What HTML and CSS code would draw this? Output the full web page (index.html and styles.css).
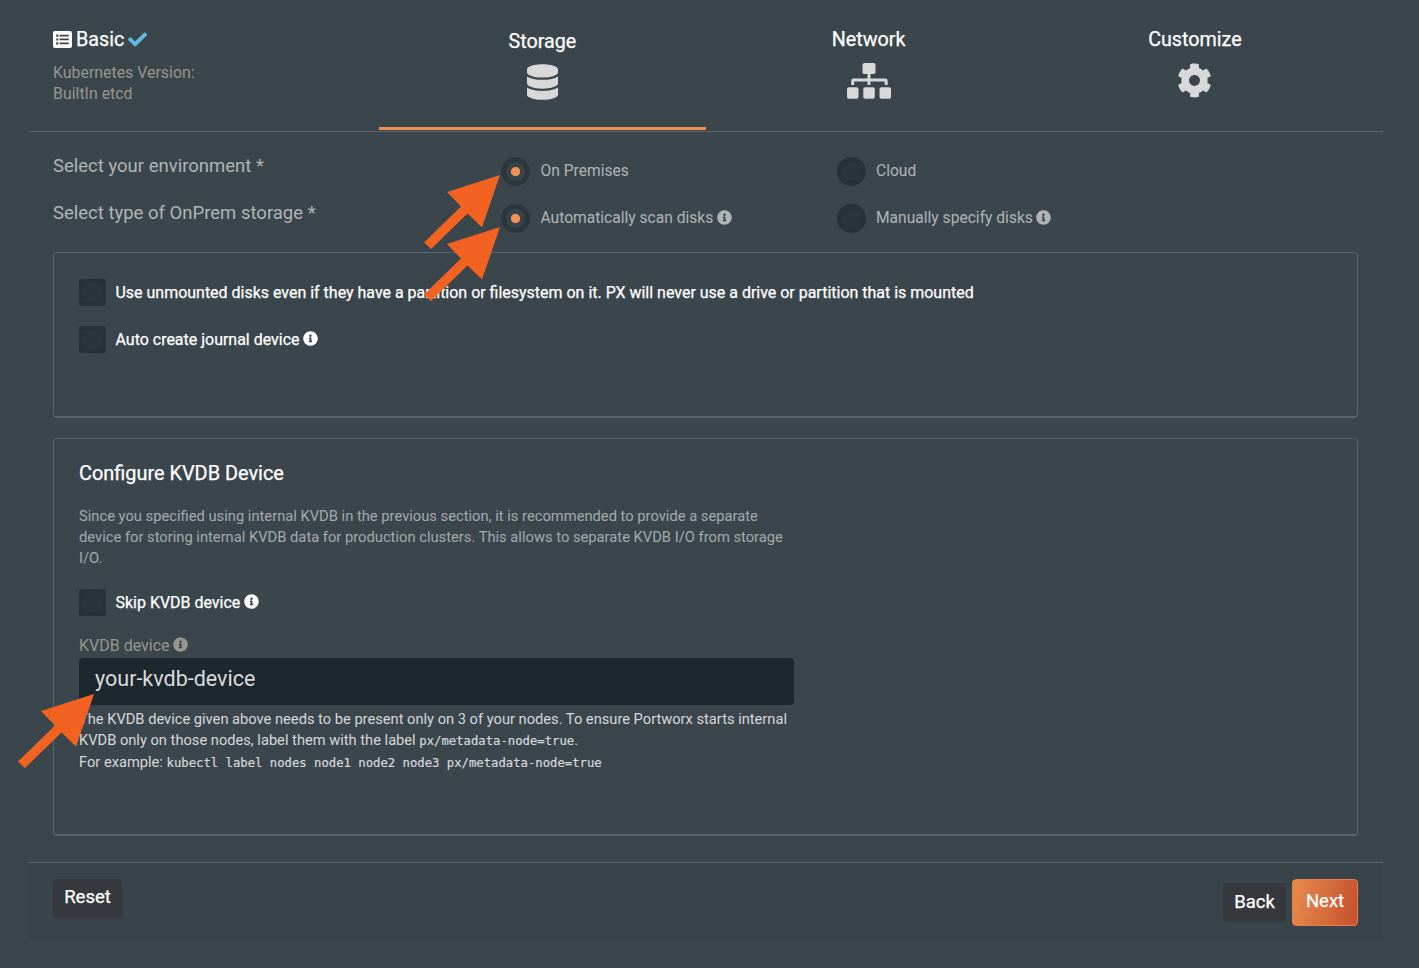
FILE: index.html
```html
<!DOCTYPE html>
<html lang="en">
<head>
<meta charset="utf-8">
<title>Spec Generator</title>
<link rel="stylesheet" href="styles.css">
</head>
<body>
<svg class="defs" width="0" height="0" aria-hidden="true">
  <symbol id="info" viewBox="0 0 512 512"><path d="M256 8C119.043 8 8 119.083 8 256c0 136.997 111.043 248 248 248s248-111.003 248-248C504 119.083 392.957 8 256 8zm0 110c23.196 0 42 18.804 42 42s-18.804 42-42 42-42-18.804-42-42 18.804-42 42-42zm56 254c0 6.627-5.373 12-12 12h-88c-6.627 0-12-5.373-12-12v-24c0-6.627 5.373-12 12-12h12v-64h-12c-6.627 0-12-5.373-12-12v-24c0-6.627 5.373-12 12-12h64c6.627 0 12 5.373 12 12v100h12c6.627 0 12 5.373 12 12v24z"/></symbol>
  <symbol id="arrow" viewBox="0 0 83 75"><path d="M82 1 29 18 43 32.500 6 68.500 13 75 49.500 39.500 64 53.500z"/></symbol>
</svg>
<main class="wizard">
  <nav class="tabs">
    <div class="tab tab-basic">
      <div class="tab-title">
        <svg class="icon-list" viewBox="0 0 19 17"><path fill-rule="evenodd" d="M2 0h15a2 2 0 0 1 2 2v13a2 2 0 0 1-2 2H2a2 2 0 0 1-2-2V2a2 2 0 0 1 2-2zM3.200 3.500v2.200h2.200V3.500zM6.600 3.700v1.700h9.200V3.700zM3.200 7.400v2.200h2.200V7.400zM6.600 7.600v1.700h9.200V7.600zM3.200 11.300v2.200h2.200v-2.200zM6.600 11.500v1.700h9.200v-1.700z"/></svg>
        <span>Basic</span>
        <svg class="icon-check" viewBox="0 0 512 512"><path d="M173.898 439.404l-166.400-166.400c-9.997-9.997-9.997-26.206 0-36.204l36.203-36.204c9.997-9.998 26.207-9.998 36.204 0L192 312.690 432.095 72.596c9.997-9.997 26.207-9.997 36.204 0l36.203 36.204c9.997 9.997 9.997 26.206 0 36.204l-294.400 294.401c-9.998 9.997-26.207 9.997-36.204-.001z"/></svg>
      </div>
      <div class="summary">Kubernetes Version:<br>BuiltIn etcd</div>
    </div>
    <div class="tab tab-active">
      <span>Storage</span>
      <svg class="icon-db" viewBox="0 0 448 512"><path d="M448 73.143v45.714C448 159.143 347.667 192 224 192S0 159.143 0 118.857V73.143C0 32.857 100.333 0 224 0s224 32.857 224 73.143zM448 176v102.857C448 319.143 347.667 352 224 352S0 319.143 0 278.857V176c48.125 33.143 136.208 48.572 224 48.572S399.874 209.143 448 176zm0 160v102.857C448 479.143 347.667 512 224 512S0 479.143 0 438.857V336c48.125 33.143 136.208 48.572 224 48.572S399.874 369.143 448 336z"/></svg>
    </div>
    <div class="tab">
      <span>Network</span>
      <svg class="icon-map" viewBox="0 0 44 36"><rect x="15.500" y="0" width="13" height="11" rx="1.800"/><rect y="24.300" width="11.500" height="11.500" rx="1.800"/><rect x="16.300" y="24.300" width="11.500" height="11.500" rx="1.800"/><rect x="32.500" y="24.300" width="11.500" height="11.500" rx="1.800"/><path d="M20.500 10h3v5.500h15a2.200 2.200 0 0 1 2.200 2.200V22h-3v-3.600H23.500V22h-3v-3.600H7.200V22h-3v-4.300a2.200 2.200 0 0 1 2.200-2.200h14.100z"/></svg>
    </div>
    <div class="tab">
      <span>Customize</span>
      <svg class="icon-cog" viewBox="0 0 512 512"><path d="M487.400 315.700l-42.600-24.600c4.300-23.200 4.300-47 0-70.200l42.600-24.600c4.900-2.800 7.100-8.600 5.500-14-11.100-35.600-30-67.800-54.700-94.600-3.800-4.100-10-5.100-14.800-2.300L380.800 110c-17.900-15.400-38.500-27.300-60.800-35.100V25.800c0-5.600-3.900-10.500-9.400-11.700-36.700-8.200-74.300-7.800-109.200 0-5.500 1.200-9.400 6.100-9.400 11.700V75c-22.200 7.900-42.800 19.800-60.800 35.100L88.700 85.500c-4.900-2.800-11-1.900-14.800 2.300-24.700 26.700-43.600 58.900-54.700 94.600-1.700 5.400.6 11.200 5.500 14L67.300 221c-4.300 23.200-4.300 47 0 70.200l-42.600 24.600c-4.900 2.800-7.100 8.600-5.500 14 11.100 35.600 30 67.800 54.700 94.600 3.800 4.100 10 5.100 14.800 2.300l42.600-24.600c17.900 15.400 38.500 27.300 60.800 35.100v49.200c0 5.600 3.900 10.500 9.400 11.700 36.700 8.200 74.300 7.800 109.200 0 5.500-1.200 9.400-6.100 9.400-11.700v-49.200c22.200-7.900 42.800-19.800 60.800-35.100l42.600 24.600c4.900 2.800 11 1.900 14.800-2.300 24.700-26.700 43.600-58.900 54.700-94.600 1.500-5.500-.7-11.300-5.600-14.100zM256 336c-44.100 0-80-35.900-80-80s35.900-80 80-80 80 35.900 80 80-35.900 80-80 80z"/></svg>
    </div>
  </nav>

  <section class="choices">
    <div class="choice-row">
      <div class="question">Select your environment *</div>
      <label class="option"><i class="radio on"></i><span>On Premises</span></label>
      <label class="option"><i class="radio"></i><span>Cloud</span></label>
    </div>
    <div class="choice-row">
      <div class="question">Select type of OnPrem storage *</div>
      <label class="option"><i class="radio on"></i><span>Automatically scan disks</span><svg class="info"><use href="#info"/></svg></label>
      <label class="option"><i class="radio"></i><span>Manually specify disks</span><svg class="info"><use href="#info"/></svg></label>
    </div>
  </section>

  <section class="card card-disks">
    <label class="check"><i class="box"></i><span>Use unmounted disks even if they have a partition or filesystem on it. PX will never use a drive or partition that is mounted</span></label>
    <label class="check"><i class="box"></i><span>Auto create journal device</span><svg class="info"><use href="#info"/></svg></label>
  </section>

  <section class="card card-kvdb">
    <h2>Configure KVDB Device</h2>
    <p class="intro">Since you specified using internal KVDB in the previous section, it is recommended to provide a separate<br>device for storing internal KVDB data for production clusters. This allows to separate KVDB I/O from storage<br>I/O.</p>
    <label class="check"><i class="box"></i><span>Skip KVDB device</span><svg class="info"><use href="#info"/></svg></label>
    <div class="field-label"><span>KVDB device</span><svg class="info"><use href="#info"/></svg></div>
    <div class="field">your-kvdb-device</div>
    <p class="help">The KVDB device given above needs to be present only on 3 of your nodes. To ensure Portworx starts internal<br>KVDB only on those nodes, label them with the label <code>px/metadata-node=true</code>.<br><span class="example">For example: </span><code>kubectl label nodes node1 node2 node3 px/metadata-node=true</code></p>
  </section>

  <footer class="actions">
    <button class="btn reset">Reset</button>
    <button class="btn back">Back</button>
    <button class="btn next">Next</button>
  </footer>
</main>
<svg class="arrow arrow-env"><use href="#arrow"/></svg>
<svg class="arrow arrow-type"><use href="#arrow"/></svg>
<svg class="arrow arrow-field"><use href="#arrow"/></svg>
</body>
</html>
```
FILE: styles.css
```css
* { box-sizing: border-box; }
body { margin: 0; width: 1419px; height: 968px; overflow: hidden; background: #3a464c; color: #fff; font-family: Roboto, "Liberation Sans", sans-serif; font-size: 15px; line-height: 21px; }
.defs { position: absolute; }
svg { fill: currentColor; flex: none; display: block; }
.wizard { width: 1355px; margin-left: 28px; }

.tabs { height: 132px; padding: 0 25px; border-bottom: 1px solid #55656a; display: grid; grid-template-columns: repeat(4, 1fr); }
.tab { display: flex; flex-direction: column; align-items: center; padding-top: 27px; font-size: 19.700px; line-height: 25px; -webkit-text-stroke: 0.250px; }
.tab svg { stroke: none; }
.tab > svg { color: #d6d8da; }
.tab-active { padding-top: 29px; height: 130px; border-bottom: 3px solid #f18e50; }
.tab-basic { align-items: flex-start; }
.tab-title { display: flex; align-items: center; }
.icon-list { width: 19px; height: 17px; margin: 0 4px 1px 0; }
.icon-check { width: 19px; height: 19px; margin: 0 0 1px 4px; color: #61b9e3; }
.summary { margin-top: 10px; font-size: 15.900px; line-height: 21px; color: #96968f; -webkit-text-stroke: 0; }
.icon-db { width: 31px; height: 36px; margin-top: 10px; }
.icon-map { width: 44px; height: 36px; margin-top: 11px; }
.icon-cog { width: 35px; height: 35px; margin-top: 11px; }

.choices { padding: 16px 25px 0; height: 120px; color: #b0b4b6; }
.choice-row { display: flex; height: 47px; }
.question { width: 448px; font-size: 18.500px; line-height: 36px; }
.option { width: 335.500px; display: flex; align-items: center; height: 46px; font-size: 15.600px; line-height: 46px; }
.radio { width: 29px; height: 29px; border-radius: 50%; border: 5px solid #263238; background: #29353b; margin-right: 10.500px; flex: none; }
.radio.on { background: radial-gradient(circle, #f18e50 4.300px, #37444a 5px); border-color: #2b373d; }
.info { width: 15px; height: 15px; margin: 0 0 2px 3.500px; }

.card { margin: 0 25px; border: 1px solid #55656a; border-bottom-width: 2px; border-radius: 4px; padding: 26px 25px; }
.card-disks { height: 166px; }
.card-kvdb { height: 398px; margin-top: 20px; padding-top: 22px; }
.check { display: flex; align-items: center; height: 27px; margin-bottom: 20px; font-size: 15.970px; }
.check span { -webkit-text-stroke: 0.250px; }
.box { width: 27px; height: 27px; border: 4px solid #263238; border-radius: 3px; background: #29353b; margin-right: 9.500px; flex: none; }
h2 { margin: 0; font-size: 19.900px; line-height: 25px; font-weight: 400; -webkit-text-stroke: 0.250px; }
p { margin: 0; }
.intro { margin: 20px 0 20px; font-size: 14.730px; color: #a5aaac; }
.card-kvdb .check { margin-bottom: 18px; }
.field-label { display: flex; align-items: center; color: #96968f; height: 22px; font-size: 16px; }
.field { width: 715px; height: 47px; margin: 2px 0 4px; padding: 0 16px; line-height: 42px; font-size: 21.500px; background: #1d282e; color: #d9dbdc; border-radius: 4px; }
.help { color: #d6d8da; font-size: 14.670px; line-height: 21.400px; }
code { font-family: "DejaVu Sans Mono", monospace; font-size: 12.250px; line-height: 1; -webkit-text-stroke: 0.200px; }

.actions { margin-top: 26px; height: 78px; padding: 16px 25px 0; border-top: 1px solid #55656a; background: #384449; display: flex; align-items: flex-start; }
.btn { border: 0; border-radius: 4px; height: 39px; padding: 0 0 3px; background: #35393d; color: #fff; font: 18.500px/36px Roboto, sans-serif; -webkit-text-stroke: 0.250px; text-align: center; }
.reset { width: 69px; margin-right: auto; }
.back { width: 63px; margin: 4px 6px 0 0; padding: 0 0 2px; }
.next { width: 66px; height: 47px; border: 1px solid #e98144; background: linear-gradient(100deg, #e98a4c, #c5502e); }

.arrow { position: absolute; width: 83px; height: 75px; fill: #f26322; }
.arrow-env { left: 418px; top: 174px; }
.arrow-type { left: 418px; top: 226px; }
.arrow-field { left: 12px; top: 693px; }
```
